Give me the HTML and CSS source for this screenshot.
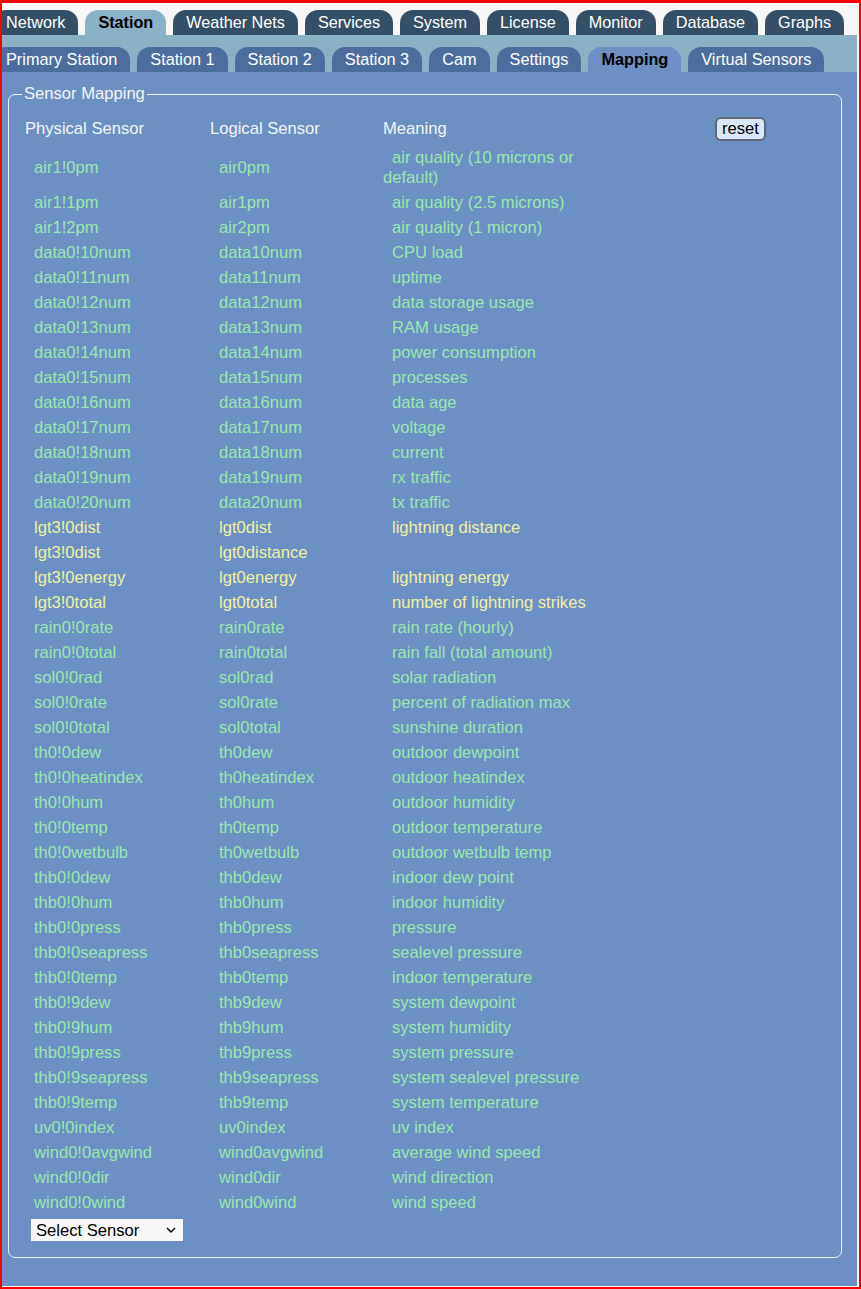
FILE: index.html
```html
<!DOCTYPE html>
<html lang="en">
<head>
    <meta charset="UTF-8">
    <meta name="viewport" content="width=device-width, initial-scale=1.0">
    <title>Station - Mapping</title>
    <link rel="stylesheet" href="styles.css">
</head>
<body>
    <div class="frame">
        <ul class="tabs">
            <li>Network</li>
            <li class="active">Station</li>
            <li>Weather Nets</li>
            <li>Services</li>
            <li>System</li>
            <li>License</li>
            <li>Monitor</li>
            <li>Database</li>
            <li>Graphs</li>
        </ul>
        <ul class="subtabs">
            <li>Primary Station</li>
            <li>Station 1</li>
            <li>Station 2</li>
            <li>Station 3</li>
            <li>Cam</li>
            <li>Settings</li>
            <li class="active">Mapping</li>
            <li>Virtual Sensors</li>
        </ul>
        <div class="content">
            <fieldset class="mapping">
                <legend>Sensor Mapping</legend>
                <table class="map-table">
                    <colgroup>
                        <col class="c-phys">
                        <col class="c-log">
                        <col class="c-mean">
                        <col class="c-act">
                    </colgroup>
                    <thead>
                        <tr>
                            <th>Physical Sensor</th>
                            <th>Logical Sensor</th>
                            <th>Meaning</th>
                            <th class="act"><button class="reset-btn">reset</button></th>
                        </tr>
                    </thead>
                    <tbody id="rows"></tbody>
                </table>
                <div class="select-wrap">
                    <select class="sensor-select">
                        <option>Select Sensor</option>
                    </select>
                    <svg class="chevron" width="10" height="6" viewBox="0 0 10 6"><path d="M1 1l4 4 4-4" fill="none" stroke="#000" stroke-width="1.4"/></svg>
                </div>
            </fieldset>
        </div>
    </div>

    <script>
        const sensors = [
            ['air1!0pm', 'air0pm', 'air quality (10 microns or default)'],
            ['air1!1pm', 'air1pm', 'air quality (2.5 microns)'],
            ['air1!2pm', 'air2pm', 'air quality (1 micron)'],
            ['data0!10num', 'data10num', 'CPU load'],
            ['data0!11num', 'data11num', 'uptime'],
            ['data0!12num', 'data12num', 'data storage usage'],
            ['data0!13num', 'data13num', 'RAM usage'],
            ['data0!14num', 'data14num', 'power consumption'],
            ['data0!15num', 'data15num', 'processes'],
            ['data0!16num', 'data16num', 'data age'],
            ['data0!17num', 'data17num', 'voltage'],
            ['data0!18num', 'data18num', 'current'],
            ['data0!19num', 'data19num', 'rx traffic'],
            ['data0!20num', 'data20num', 'tx traffic'],
            ['lgt3!0dist', 'lgt0dist', 'lightning distance', 'warn'],
            ['lgt3!0dist', 'lgt0distance', '', 'warn'],
            ['lgt3!0energy', 'lgt0energy', 'lightning energy', 'warn'],
            ['lgt3!0total', 'lgt0total', 'number of lightning strikes', 'warn'],
            ['rain0!0rate', 'rain0rate', 'rain rate (hourly)'],
            ['rain0!0total', 'rain0total', 'rain fall (total amount)'],
            ['sol0!0rad', 'sol0rad', 'solar radiation'],
            ['sol0!0rate', 'sol0rate', 'percent of radiation max'],
            ['sol0!0total', 'sol0total', 'sunshine duration'],
            ['th0!0dew', 'th0dew', 'outdoor dewpoint'],
            ['th0!0heatindex', 'th0heatindex', 'outdoor heatindex'],
            ['th0!0hum', 'th0hum', 'outdoor humidity'],
            ['th0!0temp', 'th0temp', 'outdoor temperature'],
            ['th0!0wetbulb', 'th0wetbulb', 'outdoor wetbulb temp'],
            ['thb0!0dew', 'thb0dew', 'indoor dew point'],
            ['thb0!0hum', 'thb0hum', 'indoor humidity'],
            ['thb0!0press', 'thb0press', 'pressure'],
            ['thb0!0seapress', 'thb0seapress', 'sealevel pressure'],
            ['thb0!0temp', 'thb0temp', 'indoor temperature'],
            ['thb0!9dew', 'thb9dew', 'system dewpoint'],
            ['thb0!9hum', 'thb9hum', 'system humidity'],
            ['thb0!9press', 'thb9press', 'system pressure'],
            ['thb0!9seapress', 'thb9seapress', 'system sealevel pressure'],
            ['thb0!9temp', 'thb9temp', 'system temperature'],
            ['uv0!0index', 'uv0index', 'uv index'],
            ['wind0!0avgwind', 'wind0avgwind', 'average wind speed'],
            ['wind0!0dir', 'wind0dir', 'wind direction'],
            ['wind0!0wind', 'wind0wind', 'wind speed']
        ];

        const tbody = document.getElementById('rows');
        sensors.forEach(function (s) {
            const tr = document.createElement('tr');
            if (s[3]) tr.className = s[3];
            for (let i = 0; i < 3; i++) {
                const td = document.createElement('td');
                td.textContent = s[i];
                tr.appendChild(td);
            }
            tr.appendChild(document.createElement('td'));
            tbody.appendChild(tr);
        });
    </script>
</body>
</html>
```

FILE: styles.css
```css
body {
    margin: 0;
    font-family: "Liberation Sans", Arial, sans-serif;
    font-size: 16px;
}
.frame {
    box-sizing: border-box;
    height: 1289px;
    display: flex;
    flex-direction: column;
    border: 2px solid #ff0000;
    border-top-width: 3px;
    padding: 0 2px 1px 0;
    background: #f7f7f7;
    overflow: hidden;
}

/* top level tabs */
.tabs {
    display: flex;
    gap: 7px;
    margin: 0;
    padding: 7px 0 0 0;
    list-style: none;
    font-size: 16.2px;
}
.tabs li {
    height: 25px;
    line-height: 25px;
    padding: 0 13px;
    background: #354f66;
    color: #ffffff;
    border-radius: 13px 13px 0 0;
}
.tabs li:first-child {
    margin-left: -9px;
}
.tabs li.active {
    background: #8ab2c4;
    color: #000000;
    font-weight: bold;
}

/* station sub tabs */
.subtabs {
    display: flex;
    gap: 7px;
    margin: 0;
    padding: 12px 0 0 0;
    list-style: none;
    background: #8ab2c4;
    font-size: 16.3px;
}
.subtabs li {
    height: 25px;
    line-height: 25px;
    padding: 0 13px;
    background: #4d6d9f;
    color: #ffffff;
    border-radius: 13px 13px 0 0;
}
.subtabs li:first-child {
    margin-left: -9px;
}
.subtabs li.active {
    background: #6d90c4;
    color: #000000;
    font-weight: bold;
}

.content {
    flex: 1;
    background: #6d90c4;
    padding-top: 12px;
}

.mapping {
    margin: 0 15px 0 6px;
    padding: 8px 13px 16px 13px;
    border: 1px solid #eef2fa;
    border-radius: 7px;
    font-size: 16.6px;
}
.mapping legend {
    padding: 0 2px;
    color: #f4f4f4;
}

.map-table {
    table-layout: fixed;
    width: 100%;
    border-collapse: collapse;
}
.c-phys { width: 185px; }
.c-log { width: 173px; }
.c-mean { width: 217px; }
.map-table th {
    height: 33px;
    padding: 0 0 0 3px;
    text-align: left;
    font-weight: normal;
    color: #f4f4f4;
}
.map-table th.act {
    padding-left: 118px;
}
.map-table td {
    height: 20px;
    padding: 2.5px 0 2.5px 3px;
    line-height: 20px;
    text-indent: 9px;
    color: #96eaae;
    vertical-align: middle;
}
.map-table tr.warn td {
    color: #f0f0a2;
}

.reset-btn {
    font-family: "Liberation Sans", Arial, sans-serif;
    font-size: 16.6px;
    height: 24px;
    padding: 0 5px;
    background: #dbe8fb;
    color: #000000;
    border: 2px solid #5f6877;
    border-radius: 6px;
}

.select-wrap {
    position: relative;
    width: 152px;
    margin: 4px 0 0 9px;
}
.sensor-select {
    appearance: none;
    width: 152px;
    height: 22px;
    padding: 0 0 0 5px;
    border: none;
    border-radius: 0;
    background: #f8f8f8;
    color: #000000;
    font-family: "Liberation Sans", Arial, sans-serif;
    font-size: 16.6px;
    display: block;
}
.chevron {
    position: absolute;
    right: 7px;
    top: 8px;
    pointer-events: none;
}
```
